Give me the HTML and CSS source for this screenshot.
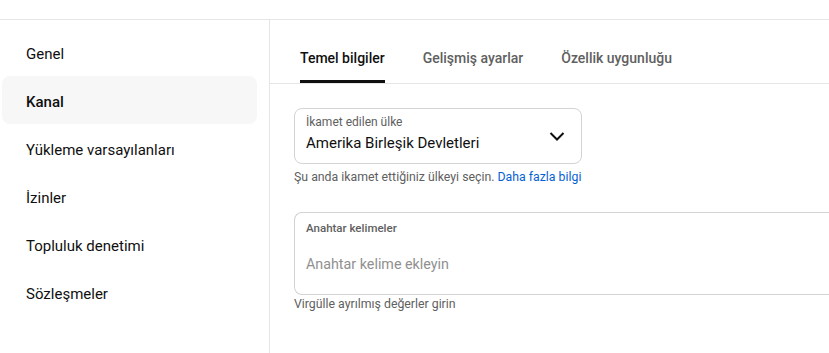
FILE: index.html
```html
<!DOCTYPE html>
<html lang="tr">
<head>
<meta charset="utf-8">
<link rel="stylesheet" href="styles.css">
</head>
<body>
<div class="topbar"></div>
<div class="layout">
  <nav class="sidebar">
    <div class="nav-item">Genel</div>
    <div class="nav-item active">Kanal</div>
    <div class="nav-item">Yükleme varsayılanları</div>
    <div class="nav-item">İzinler</div>
    <div class="nav-item">Topluluk denetimi</div>
    <div class="nav-item">Sözleşmeler</div>
  </nav>
  <main class="content">
    <div class="tabs">
      <div class="tab active">Temel bilgiler</div>
      <div class="tab">Gelişmiş ayarlar</div>
      <div class="tab">Özellik uygunluğu</div>
    </div>
    <div class="form">
      <div class="select">
        <div class="select-text">
          <div class="field-label">İkamet edilen ülke</div>
          <div class="select-value">Amerika Birleşik Devletleri</div>
        </div>
        <svg class="chevron" width="24" height="24" viewBox="0 0 24 24"><path d="M5.5 9l6.5 6.5L18.5 9" fill="none" stroke="#0f0f0f" stroke-width="2"/></svg>
      </div>
      <div class="helper">Şu anda ikamet ettiğiniz ülkeyi seçin. <a class="link">Daha fazla bilgi</a></div>
      <div class="keywords">
        <div class="kw-label">Anahtar kelimeler</div>
        <div class="kw-placeholder">Anahtar kelime ekleyin</div>
      </div>
      <div class="helper helper-kw">Virgülle ayrılmış değerler girin</div>
    </div>
  </main>
</div>
</body>
</html>
```
FILE: styles.css
```css
* { box-sizing: border-box; }
html, body { margin: 0; padding: 0; }
body {
  font-family: Roboto, "Noto Sans", Arial, sans-serif;
  color: #0f0f0f;
  background: #fff;
  width: 829px;
  height: 353px;
  overflow: hidden;
}
.topbar {
  height: 20px;
  border-bottom: 1px solid #e5e5e5;
}
.layout {
  display: flex;
  height: 333px;
}
.sidebar {
  width: 270px;
  flex: none;
  border-right: 1px solid #e5e5e5;
  padding: 8px 12px 0 2px;
}
.nav-item {
  height: 48px;
  display: flex;
  align-items: center;
  padding-left: 24px;
  padding-top: 4px;
  font-size: 15px;
  color: #0f0f0f;
  border-radius: 8px;
}
.nav-item.active {
  background: #f7f7f7;
  font-weight: 500;
}
.content {
  flex: 1;
  min-width: 0;
}
.tabs {
  display: flex;
  gap: 38px;
  padding-left: 30px;
  border-bottom: 1px solid #e5e5e5;
  height: 64px;
}
.tab {
  font-size: 14px;
  font-weight: 500;
  color: #606060;
  display: flex;
  align-items: center;
  padding-top: 16px;
  border-bottom: 3px solid transparent;
}
.tab.active {
  color: #0f0f0f;
  border-bottom-color: #0f0f0f;
}
.form {
  padding: 24px 0 0 24px;
}
.select {
  width: 288px;
  height: 56px;
  border: 1px solid #d3d3d3;
  border-radius: 8px;
  display: flex;
  align-items: center;
  justify-content: space-between;
  padding: 0 12px 0 11px;
}
.field-label {
  font-size: 12px;
  color: #606060;
  line-height: 14px;
  margin-bottom: 3px;
  margin-top: -3px;
}
.select-value {
  font-size: 15px;
  line-height: 22px;
}
.chevron { flex: none; }
.helper {
  font-size: 12.3px;
  color: #606060;
  line-height: 16px;
  margin-top: 5px;
}
.helper-kw { margin-top: 1px; }
.link { color: #065fd4; }
.keywords {
  margin-top: 27px;
  height: 83px;
  border: 1px solid #d3d3d3;
  border-right: none;
  border-radius: 8px 0 0 8px;
  padding: 7px 11px;
}
.kw-label {
  font-size: 11.5px;
  font-weight: 500;
  color: #606060;
  line-height: 16px;
}
.kw-placeholder {
  margin-top: 18px;
  font-size: 14.3px;
  color: #909090;
  line-height: 20px;
}
```
